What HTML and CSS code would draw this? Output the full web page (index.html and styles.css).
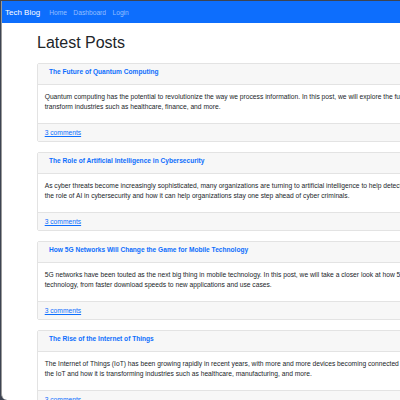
FILE: index.html
```html
<!DOCTYPE html>
<html lang="en">
<head>
<meta charset="utf-8">
<title>Tech Blog</title>
<link rel="stylesheet" href="styles.css">
</head>
<body>
<div class="window">
  <nav class="navbar">
    <a class="brand" href="#">Tech Blog</a>
    <a class="nav-link" href="#">Home</a>
    <a class="nav-link" href="#">Dashboard</a>
    <a class="nav-link" href="#">Login</a>
  </nav>
  <main class="container">
    <h1 class="page-title">Latest Posts</h1>

    <article class="card">
      <div class="card-header"><a class="card-title" href="#">The Future of Quantum Computing</a></div>
      <div class="card-body">
        <p>Quantum computing has the potential to revolutionize the way we process information. In this post, we will explore the future of quantum computing and how it will<br>transform industries such as healthcare, finance, and more.</p>
      </div>
      <div class="card-footer"><a href="#">3 comments</a></div>
    </article>

    <article class="card">
      <div class="card-header"><a class="card-title" href="#">The Role of Artificial Intelligence in Cybersecurity</a></div>
      <div class="card-body">
        <p>As cyber threats become increasingly sophisticated, many organizations are turning to artificial intelligence to help detect and prevent attacks. In this post, we will explore<br>the role of AI in cybersecurity and how it can help organizations stay one step ahead of cyber criminals.</p>
      </div>
      <div class="card-footer"><a href="#">3 comments</a></div>
    </article>

    <article class="card">
      <div class="card-header"><a class="card-title" href="#">How 5G Networks Will Change the Game for Mobile Technology</a></div>
      <div class="card-body">
        <p>5G networks have been touted as the next big thing in mobile technology. In this post, we will take a closer look at how 5G will change the game for mobile<br>technology, from faster download speeds to new applications and use cases.</p>
      </div>
      <div class="card-footer"><a href="#">3 comments</a></div>
    </article>

    <article class="card">
      <div class="card-header"><a class="card-title" href="#">The Rise of the Internet of Things</a></div>
      <div class="card-body">
        <p>The Internet of Things (IoT) has been growing rapidly in recent years, with more and more devices becoming connected to the internet. In this post, we will explore<br>the IoT and how it is transforming industries such as healthcare, manufacturing, and more.</p>
      </div>
      <div class="card-footer"><a href="#">3 comments</a></div>
    </article>
  </main>
</div>
</body>
</html>
```

FILE: styles.css
```css
html, body {
  margin: 0;
  height: 100%;
}

body {
  background: #3d4452;
  font-family: "Liberation Sans", Arial, sans-serif;
  color: #212529;
  overflow: hidden;
}

.window {
  margin: 1px 0 0 1px;
  height: 399px;
  background: #fff;
  overflow: hidden;
  border-bottom-left-radius: 6px;
  border-left: 1px solid #9a9a9a;
}

.navbar {
  height: 22px;
  background: #0d6efd;
  display: flex;
  align-items: center;
  padding: 0 3.2px 0 3px;
}

.navbar a {
  text-decoration: none;
}

.brand {
  color: #fff;
  font-size: 8px;
  margin-right: 5.8px;
}

.nav-link {
  color: rgba(255, 255, 255, 0.55);
  font-size: 6.7px;
  padding: 0 3.2px;
}

.container {
  padding: 9.6px 0 0 35px;
  width: 580px;
}

.page-title {
  font-size: 16px;
  font-weight: 500;
  line-height: 19.2px;
  margin: 0 0 11px;
}

.card {
  border: 1px solid #e3e3e3;
  border-radius: 2px;
  margin-bottom: 10px;
  overflow: hidden;
}

.card-header {
  background: #f7f7f7;
  border-bottom: 1px solid #e3e3e3;
  padding: 3px 6.4px 0 11px;
  height: 17px;
}

.card-title {
  display: block;
  color: #0d6efd;
  font-weight: 700;
  font-size: 6.6px;
  line-height: 10px;
  text-decoration: none;
  white-space: nowrap;
}

.card-body {
  height: 38px;
  box-sizing: border-box;
  padding: 7px 6.7px 0;
}

.card-body p {
  margin: 0;
  font-size: 6.7px;
  line-height: 10px;
  white-space: nowrap;
}

.card-footer {
  height: 17px;
  background: #f7f7f7;
  border-top: 1px solid #e3e3e3;
  display: flex;
  align-items: center;
  padding: 0 6.7px;
}

.card-footer a {
  color: #0d6efd;
  font-size: 6.7px;
  text-decoration: underline;
}
```
